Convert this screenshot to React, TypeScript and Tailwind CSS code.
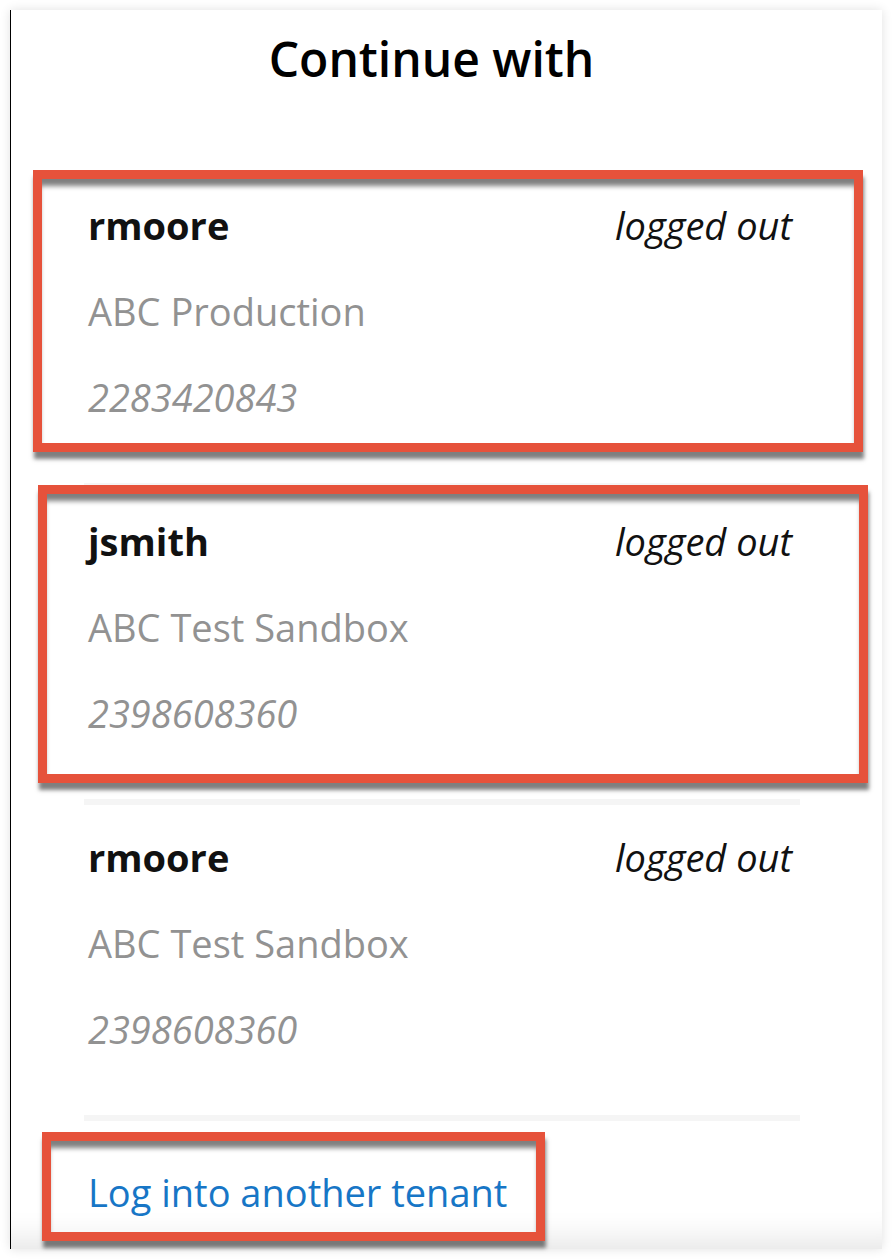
import React from 'react'

type Account = {
  user: string
  tenant: string
  id: string
  status: string
}

const ACCOUNTS: Account[] = [
  { user: 'rmoore', tenant: 'ABC Production', id: '2283420843', status: 'logged out' },
  { user: 'jsmith', tenant: 'ABC Test Sandbox', id: '2398608360', status: 'logged out' },
  { user: 'rmoore', tenant: 'ABC Test Sandbox', id: '2398608360', status: 'logged out' },
]

// red callout boxes drawn over the screenshot (page coordinates)
const CALLOUTS = [
  { left: 33, top: 170, width: 830, height: 282 },
  { left: 38, top: 485, width: 830, height: 298 },
  { left: 42, top: 1132, width: 503, height: 109 },
]

function AccountRow({ account }: { account: Account }) {
  return (
    <li className="flex flex-col gap-[34px] px-1 pt-[26px] pb-[60px] border-b-[6px] border-[#f5f5f5]">
      <div className="flex items-center justify-between leading-[52px]">
        <span className="font-bold text-[#111]">{account.user}</span>
        <span className="italic text-[#111] pr-1">{account.status}</span>
      </div>
      <div className="leading-[52px] text-[#929292]">{account.tenant}</div>
      <div className="leading-[52px] italic text-[#929292]">{account.id}</div>
    </li>
  )
}

export default function App() {
  return (
    <div className="relative w-[892px] h-[1260px] bg-white overflow-hidden font-['Open_Sans',sans-serif] text-[38px]">
      <div className="ml-[10px] mt-[10px] w-[872px] h-[1239px] bg-white border-l-[1.5px] border-black shadow-[0_0_10px_rgba(0,0,0,0.12),inset_0_-40px_30px_-30px_rgba(0,0,0,0.1)] flex flex-col">
        {/* header */}
        <h1 className="pt-[19px] pr-[30px] text-center text-[48px] leading-[60px] font-semibold text-black">
          Continue with
        </h1>

        {/* account list */}
        <ul className="mt-[84px] ml-[73px] mr-[82px] flex flex-col">
          {ACCOUNTS.map((a, i) => (
            <AccountRow key={i} account={a} />
          ))}
        </ul>

        <div className="mt-[45px] ml-[77px] leading-[52px]">
          <a className="text-[#1776c6]">Log into another tenant</a>
        </div>
      </div>

      {CALLOUTS.map((c, i) => (
        <div
          key={i}
          className="absolute border-[9px] border-[#e6523b] shadow-[1px_7px_4px_rgba(0,0,0,0.5),inset_0_9px_5px_-2px_rgba(0,0,0,0.5)]"
          style={{ left: c.left, top: c.top, width: c.width, height: c.height }}
        />
      ))}
    </div>
  )
}
